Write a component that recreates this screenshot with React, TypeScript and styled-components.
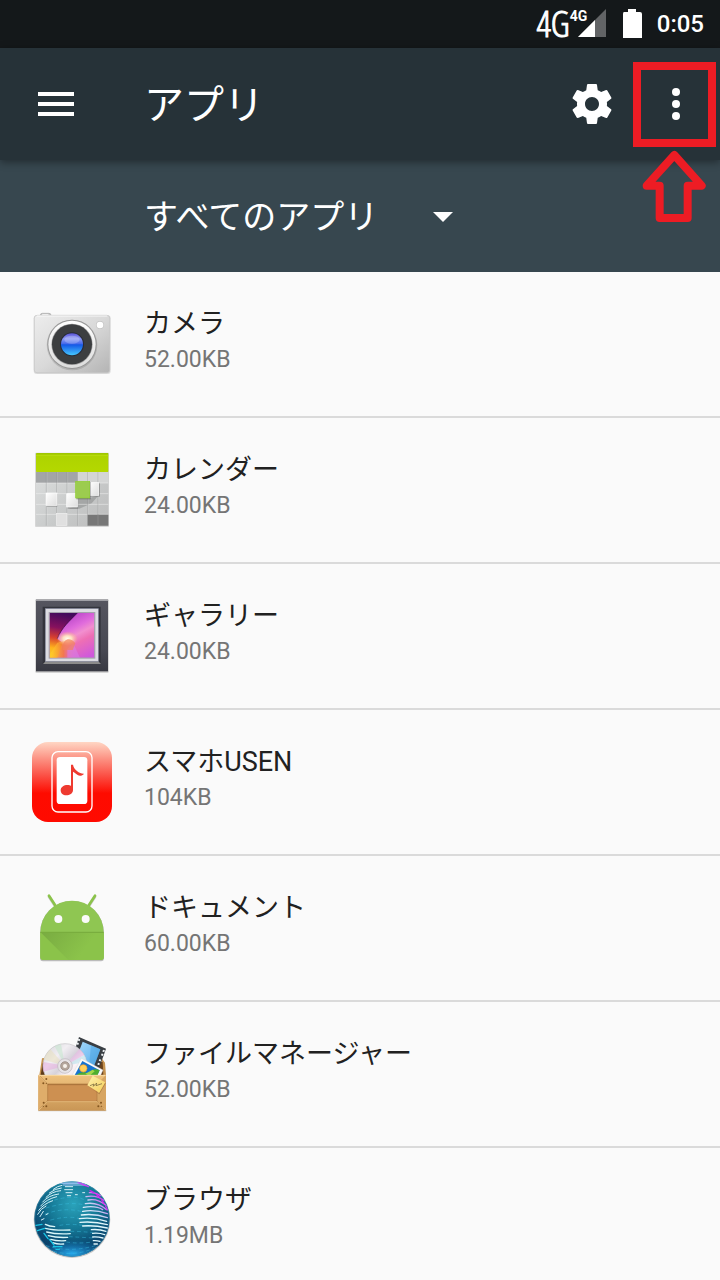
import React from "react";
import styled, { createGlobalStyle } from "styled-components";

const GlobalStyle = createGlobalStyle`
  *, *::before, *::after { box-sizing: border-box; }
  body {
    margin: 0;
    background: #fafafa;
    font-family: Roboto, "Noto Sans CJK JP", sans-serif;
  }
`;

const Screen = styled.div`
  position: relative;
  display: flex;
  flex-direction: column;
  height: 100vh;
  overflow: hidden;
  background: #fafafa;
`;

const StatusBar = styled.div`
  display: flex;
  align-items: center;
  justify-content: flex-end;
  flex: none;
  height: 48px;
  padding-right: 16px;
  background: #14181a;
  color: #fff;
`;

const NetworkType = styled.span`
  font: 300 36px/48px "Open Sans Condensed Light", "Open Sans Condensed", "Open Sans", sans-serif;
  -webkit-text-stroke: 1px currentColor;
`;

const Signal = styled.span`
  position: relative;
  display: flex;
  justify-content: flex-end;
  width: 36px;
  margin-right: 16px;
`;

const SignalLabel = styled.span`
  position: absolute;
  top: 0;
  left: 0;
  font: bold 14px/14px Roboto, sans-serif;
`;

const Clock = styled.time`
  margin-left: 15px;
  font-size: 24px;
  font-weight: 500;
  line-height: 48px;
`;

const AppBar = styled.header`
  position: relative;
  z-index: 1;
  display: flex;
  align-items: center;
  flex: none;
  height: 112px;
  padding: 0 20px 0 32px;
  background: #263238;
  box-shadow: 0 2px 8px rgba(0, 0, 0, 0.4);
  color: #fff;
`;

const IconButton = styled.button`
  display: flex;
  flex: none;
  padding: 0;
  border: 0;
  background: none;
  color: inherit;
`;

const Title = styled.h1`
  flex: 1;
  margin: 0 0 0 64px;
  padding-top: 4px;
  font-size: 40px;
  font-weight: 400;
  line-height: 56px;
`;

const Actions = styled.div`
  display: flex;
  gap: 36px;
`;

const FilterBar = styled.div`
  display: flex;
  align-items: center;
  flex: none;
  height: 112px;
  padding: 2px 0 0 144px;
  background: #37474f;
  color: #fff;
`;

const FilterField = styled.label`
  display: grid;
  align-items: center;
`;

const FilterSelect = styled.select`
  grid-area: 1 / 1;
  appearance: none;
  margin: 0;
  padding: 0 71px 0 0;
  border: 0;
  background: transparent;
  color: inherit;
  font-family: inherit;
  font-size: 34px;
  line-height: 48px;
`;

const FilterArrow = styled.svg`
  grid-area: 1 / 1;
  justify-self: end;
  pointer-events: none;
`;

const AppList = styled.ul`
  flex: 1;
  min-height: 0;
  margin: 0;
  padding: 0;
  overflow-y: auto;
  scrollbar-width: none;
  list-style: none;
`;

const AppRow = styled.li`
  display: flex;
  gap: 32px;
  height: 146px;
  padding: 32px 32px 0;
  border-bottom: 2px solid #dadada;
`;

const AppIcon = styled.svg`
  flex: none;
  width: 80px;
  height: 80px;
  overflow: visible;
`;

const AppText = styled.div`
  min-width: 0;
`;

const AppName = styled.div`
  color: #212121;
  font-size: 27px;
  line-height: 40px;
`;

const AppSize = styled.div`
  color: #757575;
  font-size: 23px;
  line-height: 32px;
`;

const Highlight = styled.div`
  position: absolute;
  z-index: 2;
  top: 62px;
  right: 4px;
  width: 83px;
  height: 85px;
  border: 8px solid #ed1c24;
  pointer-events: none;
`;

const Pointer = styled.svg`
  position: absolute;
  z-index: 2;
  top: 150px;
  right: 14px;
  pointer-events: none;
`;

const CameraIcon = () => (
  <AppIcon viewBox="36 12 240 240" aria-hidden="true">
    <defs>
      <linearGradient id="camBody" x1="0" y1="0" x2="1" y2="1">
        <stop offset="0" stopColor="#ededed" />
        <stop offset="0.5" stopColor="#d9d9d9" />
        <stop offset="1" stopColor="#b4b4b4" />
      </linearGradient>
      <linearGradient id="camRing" x1="0" y1="0" x2="0" y2="1">
        <stop offset="0" stopColor="#ffffff" />
        <stop offset="1" stopColor="#dcdcdc" />
      </linearGradient>
      <linearGradient id="camLens" x1="0" y1="0" x2="0" y2="1">
        <stop offset="0" stopColor="#5b55d8" />
        <stop offset="0.25" stopColor="#8d9af5" />
        <stop offset="0.48" stopColor="#4468ea" />
        <stop offset="0.52" stopColor="#1558e6" />
        <stop offset="1" stopColor="#45c8ff" />
      </linearGradient>
    </defs>
    <rect x="41" y="46" width="231" height="176" rx="9" fill="#000" opacity="0.12" />
    <rect x="61" y="40" width="32" height="14" rx="6" fill="#c6c6c6" stroke="#a8a8a8" strokeWidth="2" />
    <rect x="66" y="42" width="20" height="4" rx="2" fill="#f2f2f2" />
    <rect x="43" y="46" width="226" height="172" rx="8" fill="url(#camBody)" stroke="#c4c4c4" strokeWidth="2" />
    <path d="M50 48H262" stroke="#fff" strokeWidth="3" opacity="0.8" />
    <circle cx="156" cy="135" r="76" fill="#000" opacity="0.12" />
    <circle cx="156" cy="133" r="74" fill="#969696" />
    <circle cx="156" cy="133" r="71" fill="url(#camRing)" />
    <circle cx="156" cy="133" r="62" fill="#a5a5a5" />
    <circle cx="156" cy="133" r="60" fill="#3c3e40" />
    <circle cx="156" cy="133" r="36" fill="#272b38" />
    <circle cx="156" cy="133" r="33" fill="url(#camLens)" />
    <ellipse cx="156" cy="119" rx="23" ry="12" fill="#fff" opacity="0.22" />
    <circle cx="240" cy="75" r="12" fill="#c4c4c4" />
    <circle cx="240" cy="75" r="10" fill="#fff" />
  </AppIcon>
);

const CalendarIcon = () => (
  <AppIcon viewBox="36 30 240 240" aria-hidden="true">
    <defs>
      <linearGradient id="calTop" x1="0" y1="0" x2="0" y2="1">
        <stop offset="0" stopColor="#9cc400" />
        <stop offset="0.15" stopColor="#aed300" />
        <stop offset="1" stopColor="#b4d800" />
      </linearGradient>
      <linearGradient id="calBody" x1="0" y1="0" x2="1" y2="1">
        <stop offset="0" stopColor="#e2e4e4" />
        <stop offset="0.6" stopColor="#c8caca" />
        <stop offset="1" stopColor="#bcbcbc" />
      </linearGradient>
      <linearGradient id="calTile" x1="0" y1="0" x2="1" y2="1">
        <stop offset="0" stopColor="#fff" />
        <stop offset="1" stopColor="#dedede" />
      </linearGradient>
    </defs>
    <rect x="45" y="38" width="222" height="223" rx="3" fill="#000" opacity="0.14" />
    <rect x="48" y="39" width="217" height="219" rx="2" fill="url(#calBody)" />
    <path d="M48 96H173V129H48Z" fill="#a3a5a7" />
    <path d="M173 96H265V129H173Z" fill="#d4d5d5" />
    <path d="M174 174L208 174L236 166L215 190L178 206H146L172 196Z" fill="#8e9090" opacity="0.6" />
    <path d="M48 129H265M48 161H265M48 193H265M48 223H265" stroke="#f0f0f0" strokeWidth="2" opacity="0.8" />
    <path d="M79 96V257M110 96V257M141 96V257M173 96V257M203 96V257M234 96V257" stroke="#85888a" strokeWidth="2" opacity="0.5" />
    <path d="M81 96V257M112 96V257M143 96V257M175 96V257M205 96V257M236 96V257" stroke="#fff" strokeWidth="1" opacity="0.5" />
    <rect x="48" y="39" width="217" height="57" rx="2" fill="url(#calTop)" />
    <path d="M48 46H265" stroke="#c0e410" strokeWidth="2" />
    <path d="M203 224H265V257H203Z" fill="#777" />
    <path d="M234 224V257" stroke="#919191" strokeWidth="2" />
    <rect x="80" y="162" width="32" height="38" fill="#777" opacity="0.6" />
    <rect x="78" y="159" width="33" height="37" fill="url(#calTile)" stroke="#fff" strokeWidth="2" />
    <rect x="109" y="220" width="32" height="36" fill="#e0e0e0" stroke="#f0f0f0" strokeWidth="2" />
    <rect x="143" y="164" width="32" height="42" fill="#666" opacity="0.5" />
    <rect x="140" y="161" width="32" height="40" fill="url(#calTile)" stroke="#fff" strokeWidth="2" />
    <rect x="209" y="130" width="31" height="40" fill="#666" opacity="0.5" />
    <rect x="207" y="128" width="29" height="38" fill="url(#calTile)" stroke="#fff" strokeWidth="2" />
    <rect x="169" y="126" width="43" height="52" fill="#555" opacity="0.5" />
    <rect x="167" y="124" width="42" height="50" fill="#9ccc4f" stroke="#8ed02e" strokeWidth="2" />
  </AppIcon>
);

const GalleryIcon = () => (
  <AppIcon viewBox="36 30 240 240" aria-hidden="true">
    <defs>
      <linearGradient id="galFrame" x1="0" y1="0" x2="0" y2="1">
        <stop offset="0" stopColor="#55555f" />
        <stop offset="0.7" stopColor="#474852" />
        <stop offset="1" stopColor="#383942" />
      </linearGradient>
      <linearGradient id="galPink" gradientUnits="userSpaceOnUse" x1="140" y1="100" x2="200" y2="215">
        <stop offset="0" stopColor="#c04ccc" />
        <stop offset="0.25" stopColor="#e06bdc" />
        <stop offset="0.42" stopColor="#f28fcf" />
        <stop offset="0.6" stopColor="#ee6fb4" />
        <stop offset="1" stopColor="#cf58dc" />
      </linearGradient>
      <linearGradient id="galDark" gradientUnits="userSpaceOnUse" x1="120" y1="81" x2="98" y2="205">
        <stop offset="0" stopColor="#430a5c" />
        <stop offset="0.35" stopColor="#86115e" />
        <stop offset="0.6" stopColor="#d8402f" />
        <stop offset="0.85" stopColor="#ffb41c" />
        <stop offset="1" stopColor="#f7c32c" />
      </linearGradient>
      <linearGradient id="galFade" gradientUnits="userSpaceOnUse" x1="96" y1="200" x2="165" y2="200">
        <stop offset="0" stopColor="#ffc927" />
        <stop offset="0.5" stopColor="#f47a3c" />
        <stop offset="1" stopColor="#e56ac4" stopOpacity="0" />
      </linearGradient>
      <radialGradient id="galGlow">
        <stop offset="0" stopColor="#fffdf0" />
        <stop offset="0.4" stopColor="#ffe9c0" stopOpacity="0.9" />
        <stop offset="1" stopColor="#ffb27a" stopOpacity="0" />
      </radialGradient>
      <clipPath id="galClip">
        <rect x="89" y="81" width="134" height="134" />
      </clipPath>
    </defs>
    <rect x="46" y="40" width="220" height="220" rx="3" fill="#000" opacity="0.2" />
    <rect x="48" y="41" width="216" height="215" fill="url(#galFrame)" />
    <path d="M48 43H264" stroke="#b0b0b5" strokeWidth="3" />
    <path d="M68 62H242V234H68Z" fill="#33343c" />
    <path d="M69 234L77 226H235L243 234Z" fill="#8b8b8b" />
    <rect x="76" y="68" width="159" height="158" fill="#dcdce2" stroke="#8a8da0" strokeWidth="2" />
    <rect x="86" y="78" width="140" height="140" fill="#a4a2ac" />
    <g clipPath="url(#galClip)">
      <rect x="89" y="81" width="134" height="134" fill="url(#galPink)" />
      <path d="M89 81H172C150 104 125 124 112 158L128 170L112 215H89Z" fill="url(#galDark)" />
      <path d="M172 81C150 104 125 124 112 158" fill="none" stroke="#2c0639" strokeWidth="2" />
      <path d="M89 206L112 170L150 160L165 180V215H89Z" fill="url(#galFade)" opacity="0.85" />
      <path d="M142 190L160 172L180 215H142Z" fill="#d784ea" opacity="0.5" />
      <ellipse cx="142" cy="158" rx="32" ry="22" fill="url(#galGlow)" />
      <path d="M128 180C132 156 152 154 166 172L158 192H128Z" fill="#f2825c" opacity="0.7" />
    </g>
  </AppIcon>
);

const MusicIcon = () => (
  <AppIcon viewBox="36 30 240 240" aria-hidden="true">
    <defs>
      <linearGradient id="usen" gradientUnits="userSpaceOnUse" x1="0" y1="30" x2="0" y2="270">
        <stop offset="0" stopColor="#ffd6c4" />
        <stop offset="0.2" stopColor="#fc9586" />
        <stop offset="0.42" stopColor="#fb5045" />
        <stop offset="0.64" stopColor="#fe0b00" />
        <stop offset="1" stopColor="#ff0a00" />
      </linearGradient>
    </defs>
    <rect x="36" y="30" width="240" height="240" rx="48" fill="url(#usen)" />
    <rect x="96" y="59" width="120" height="181" rx="18" fill="none" stroke="#fff" strokeWidth="4" />
    <rect x="110" y="75" width="92" height="141" rx="10" fill="#fff" />
    <path d="M153 98H159C161 113 180 126 192 125C187 132 178 133 173 129C167 124 162 120 159 119V174C159 184 149 190 139 190C129 190 122 184 122 175C122 165 132 159 142 159C147 159 151 160 153 162Z" fill="#ee3a30" />
  </AppIcon>
);

const AndroidIcon = () => (
  <AppIcon viewBox="36 24 240 240" aria-hidden="true">
    <defs>
      <linearGradient id="droidFold" gradientUnits="userSpaceOnUse" x1="70" y1="165" x2="170" y2="240">
        <stop offset="0" stopColor="#7aad42" />
        <stop offset="1" stopColor="#8bc34a" />
      </linearGradient>
    </defs>
    <g fill="none" stroke="#000" strokeOpacity="0.2" strokeWidth="8" strokeLinecap="round">
      <path d="M87 50L105 78M225 50L207 78" />
    </g>
    <path d="M60 159A96 96 0 0 1 252 159V234Q252 244 243 244H69Q60 244 60 234Z" fill="#000" opacity="0.25" />
    <path d="M87 47L107 78M225 47L205 78" stroke="#8bc34a" strokeWidth="8" strokeLinecap="round" />
    <path d="M61 157A95 95 0 0 1 251 157V231Q251 240 242 240H70Q61 240 61 231Z" fill="#8fc652" />
    <path d="M61 157H251V231Q251 240 242 240H70Q61 240 61 231Z" fill="#8bc34a" />
    <path d="M64 159H251V231Q251 240 242 240H145Z" fill="url(#droidFold)" />
    <path d="M61 157H251" stroke="#699b36" strokeWidth="2" />
    <circle cx="115" cy="117" r="12" fill="#fafafa" />
    <circle cx="197" cy="117" r="12" fill="#fafafa" />
  </AppIcon>
);

const FileManagerIcon = () => (
  <AppIcon viewBox="36 24 240 240" aria-hidden="true">
    <defs>
      <linearGradient id="boxWood" x1="0" y1="0" x2="0" y2="1">
        <stop offset="0" stopColor="#efc27e" />
        <stop offset="1" stopColor="#c99655" />
      </linearGradient>
      <linearGradient id="disc" x1="0" y1="0" x2="1" y2="1">
        <stop offset="0" stopColor="#d4d4d8" />
        <stop offset="0.3" stopColor="#f1eef2" />
        <stop offset="0.48" stopColor="#d6d2da" />
        <stop offset="0.6" stopColor="#faf3f7" />
        <stop offset="1" stopColor="#d0cbd2" />
      </linearGradient>
      <linearGradient id="film" x1="0" y1="0" x2="1" y2="1">
        <stop offset="0" stopColor="#a8dafa" />
        <stop offset="0.5" stopColor="#7cc2f4" />
        <stop offset="1" stopColor="#479fde" />
      </linearGradient>
      <linearGradient id="note" x1="0" y1="0" x2="1" y2="1">
        <stop offset="0" stopColor="#fff2ae" />
        <stop offset="1" stopColor="#f5cf58" />
      </linearGradient>
      <clipPath id="boxContents">
        <path d="M40 24H276V147H40Z" />
      </clipPath>
    </defs>
    <path d="M66 97L72 96V147H58ZM246 98L255 110L258 147H236Z" fill="#c5924f" />
    <path d="M68 112L76 108V147H62Z" fill="#5d3b1a" />
    <path d="M236 108H248L250 147H232Z" fill="#6b431d" />
    <g clipPath="url(#boxContents)">
      <path d="M177 33L258 68L229 150L150 116Z" fill="#393e43" />
      <path d="M188 47L241 70L219 128L166 105Z" fill="url(#film)" />
      <path d="M213 58L241 70L219 128L207 123Z" fill="#4ba4df" opacity="0.5" />
      <path d="M178 39L171 59M168 65L162 82M252 72L244 93M241 100L234 119" stroke="#eef2f4" strokeWidth="6" strokeDasharray="6 6" />
      <circle cx="135" cy="119" r="66" fill="url(#disc)" stroke="#c4c1c6" strokeWidth="2" />
      <path d="M135 119L72 101A66 66 0 0 1 91 70Z" fill="#e8dfaf" opacity="0.4" />
      <path d="M135 119L70 137A66 66 0 0 1 70 108Z" fill="#e5a7de" opacity="0.5" />
      <path d="M135 119L104 61A66 66 0 0 1 123 54Z" fill="#c8e6d0" opacity="0.6" />
      <path d="M135 119L178 69A66 66 0 0 1 193 87Z" fill="#e8b9e4" opacity="0.6" />
      <path d="M135 119L193 87A66 66 0 0 1 200 107Z" fill="#c3e6ee" opacity="0.7" />
      <circle cx="135" cy="120" r="22" fill="#e6e3e6" stroke="#bdb7bc" strokeWidth="2" />
      <circle cx="135" cy="120" r="13" fill="#b5a79d" stroke="#8b7d74" strokeWidth="2" />
      <circle cx="135" cy="120" r="6" fill="#f7f2ec" />
      <path d="M184 97L249 132L240 152H154Z" fill="#fafafa" stroke="#cdd2d7" strokeWidth="1" />
      <path d="M187 105L239 133L230 151H162Z" fill="#1673cf" />
      <path d="M170 147C182 136 196 138 206 143C215 129 228 127 239 133L231 151H168Z" fill="#4fae2f" />
      <path d="M196 143L218 131L224 136L208 150Z" fill="#a5d84a" />
      <circle cx="190" cy="127" r="11" fill="#ffd05c" stroke="#f3a22d" strokeWidth="2" />
    </g>
    <rect x="54" y="250" width="205" height="6" rx="2" fill="#000" opacity="0.2" />
    <rect x="55" y="147" width="203" height="107" rx="2" fill="url(#boxWood)" />
    <path d="M55 148H258" stroke="#f9dba5" strokeWidth="3" />
    <path d="M55 147L83 174V226L55 254Z" fill="#dfad6a" />
    <path d="M258 147L231 174V226L258 254Z" fill="#d7a562" />
    <path d="M83 174H231V226H83Z" fill="#cd9051" stroke="#b07a40" strokeWidth="2" />
    <path d="M83 176H231" stroke="#9c6630" strokeWidth="2" />
    <path d="M56 148L83 174M56 253L83 226M257 253L231 226M83 227H231" fill="none" stroke="#f2ca8c" strokeWidth="2" />
    <path d="M60 150L86 177M60 247L84 223M252 247L229 223" stroke="#92652f" strokeWidth="1" />
    <g fill="#82551f">
      <circle cx="70" cy="172" r="3" /><circle cx="79" cy="159" r="3" /><circle cx="79" cy="172" r="2" />
      <circle cx="71" cy="230" r="3" /><circle cx="79" cy="241" r="3" /><circle cx="70" cy="241" r="2" />
      <circle cx="243" cy="230" r="3" /><circle cx="235" cy="241" r="3" /><circle cx="244" cy="241" r="2" />
    </g>
    <path d="M205 181L238 205L257 172L253 168L236 202Z" fill="#704418" opacity="0.4" />
    <path d="M218 149L256 169L238 200L202 178Z" fill="url(#note)" />
    <path d="M210 179L222 174L220 181L230 171L228 179L246 173" fill="none" stroke="#695a35" strokeWidth="2" />
  </AppIcon>
);

const BrowserIcon = () => (
  <AppIcon viewBox="36 30 240 240" aria-hidden="true">
    <defs>
      <radialGradient id="globe" cx="0.52" cy="0.3" r="0.72">
        <stop offset="0" stopColor="#2ba3bb" />
        <stop offset="0.45" stopColor="#167996" />
        <stop offset="0.78" stopColor="#0b4a72" />
        <stop offset="1" stopColor="#0e3963" />
      </radialGradient>
      <radialGradient id="globeBase" cx="0.5" cy="0.5" r="0.5">
        <stop offset="0" stopColor="#27a9ec" />
        <stop offset="1" stopColor="#1683ca" stopOpacity="0" />
      </radialGradient>
      <linearGradient id="landEast" gradientUnits="userSpaceOnUse" x1="200" y1="140" x2="255" y2="85">
        <stop offset="0" stopColor="#e4f8fc" />
        <stop offset="0.5" stopColor="#c3cdf2" />
        <stop offset="1" stopColor="#d72bf0" />
      </linearGradient>
      <clipPath id="globeClip">
        <circle cx="156" cy="147" r="113" />
      </clipPath>
    </defs>
    <circle cx="156" cy="149" r="115" fill="#000" opacity="0.2" />
    <circle cx="156" cy="147" r="113" fill="url(#globe)" />
    <g clipPath="url(#globeClip)" fill="none" strokeLinecap="round">
      <ellipse cx="156" cy="250" rx="105" ry="40" fill="url(#globeBase)" />
      <g stroke="#39bde0" strokeWidth="2" strokeDasharray="9 11" opacity="0.7">
        <path d="M84 96Q156 72 190 88" />
        <path d="M78 114Q150 92 196 106" />
        <path d="M76 132Q136 110 190 126" />
        <path d="M92 150Q146 136 180 146" />
        <path d="M120 166Q160 158 216 172" />
        <path d="M152 184Q186 184 218 188" />
        <path d="M148 200Q184 202 222 204" />
        <path d="M140 216Q176 222 216 216" />
        <path d="M60 220Q140 254 236 224" />
        <path d="M82 238Q150 264 220 236" />
      </g>
      <g stroke="#d3f0f6" strokeWidth="3">
        <path d="M100 58Q112 48 126 46M88 69Q106 55 124 54M78 82Q96 64 122 62" />
        <path d="M68 96Q84 76 116 72M62 108Q78 88 110 80M56 121Q70 102 98 92" />
        <path d="M53 133Q62 116 78 108M60 140L70 124M64 150L72 146M78 134L84 131" />
        <path d="M136 50H158M134 59H158M138 68H156M142 77H152M166 74H172M188 68H194" />
      </g>
      <path d="M108 40H190M120 36H182M130 45H198" stroke="#a9c8fa" strokeWidth="3" />
      <path d="M174 37L196 47M184 40L205 50" stroke="#d03ef5" strokeWidth="4" />
      <g stroke="#d8f6f8" strokeWidth="4">
        <path d="M76 163Q88 169 104 170M76 175Q104 182 150 180M80 186Q110 194 151 191M85 197Q112 204 143 202M92 208Q112 214 137 212M98 218Q114 224 131 222" />
      </g>
      <path d="M48 166L66 163M52 182L74 175M72 190L84 206M88 208L102 225M100 230H126M108 238H118" stroke="#18c5e6" strokeWidth="4" />
      <g stroke="url(#landEast)" strokeWidth="4">
        <path d="M208 68Q226 66 242 77M198 80Q228 74 252 91M204 90Q232 84 258 106M196 101Q232 95 260 119" />
        <path d="M190 112Q228 106 248 119M188 124Q226 118 262 131M184 135Q224 130 262 143" />
      </g>
      <g stroke="#dff6fb" strokeWidth="4">
        <path d="M178 146Q220 141 260 154M180 157Q222 153 262 164M188 168Q222 165 262 174" />
        <path d="M214 179Q238 177 258 184M218 190Q238 188 254 194M218 201Q234 200 249 204M220 212Q230 211 240 214M222 222L232 222" />
      </g>
      <path d="M210 62Q246 78 263 122" stroke="#d321ef" strokeWidth="4" strokeDasharray="14 8" />
      <circle cx="156" cy="147" r="112" stroke="#47afcc" strokeWidth="2" opacity="0.6" />
    </g>
  </AppIcon>
);

const apps = [
  { name: "カメラ", size: "52.00KB", Icon: CameraIcon },
  { name: "カレンダー", size: "24.00KB", Icon: CalendarIcon },
  { name: "ギャラリー", size: "24.00KB", Icon: GalleryIcon },
  { name: "スマホUSEN", size: "104KB", Icon: MusicIcon },
  { name: "ドキュメント", size: "60.00KB", Icon: AndroidIcon },
  { name: "ファイルマネージャー", size: "52.00KB", Icon: FileManagerIcon },
  { name: "ブラウザ", size: "1.19MB", Icon: BrowserIcon },
];

export default function App() {
  return (
    <Screen lang="ja">
      <GlobalStyle />
      <StatusBar>
        <NetworkType>4G</NetworkType>
        <Signal>
          <SignalLabel>4G</SignalLabel>
          <svg width="28" height="30" viewBox="0 0 28 30" aria-hidden="true">
            <path d="M28 0V28H0Z" fill="#626466" />
            <path d="M17 11V28H0Z" fill="#fff" />
          </svg>
        </Signal>
        <svg width="20" height="30" viewBox="0 0 20 30" aria-hidden="true">
          <path d="M6 0H14V3H18Q20 3 20 5V29H1V5Q1 3 2 3H6Z" fill="#fff" />
        </svg>
        <Clock>0:05</Clock>
      </StatusBar>

      <AppBar>
        <IconButton type="button" aria-label="メニュー">
          <svg width="48" height="48" viewBox="0 0 24 24" fill="currentColor">
            <path d="M3 6h18v2H3zM3 11h18v2H3zM3 16h18v2H3z" />
          </svg>
        </IconButton>
        <Title>アプリ</Title>
        <Actions>
          <IconButton type="button" aria-label="設定">
            <svg width="48" height="48" viewBox="0 0 24 24" fill="currentColor">
              <path d="M19.43 12.98c.04-.32.07-.64.07-.98s-.03-.66-.07-.98l2.11-1.65c.19-.15.24-.42.12-.64l-2-3.46c-.12-.22-.39-.3-.61-.22l-2.49 1c-.52-.4-1.08-.73-1.69-.98l-.38-2.65C14.46 2.18 14.25 2 14 2h-4c-.25 0-.46.18-.49.42l-.38 2.65c-.61.25-1.17.59-1.69.98l-2.49-1c-.23-.09-.49 0-.61.22l-2 3.46c-.13.22-.07.49.12.64l2.11 1.65c-.04.32-.07.65-.07.98s.03.66.07.98l-2.11 1.65c-.19.15-.24.42-.12.64l2 3.46c.12.22.39.3.61.22l2.49-1c.52.4 1.08.73 1.69.98l.38 2.65c.03.24.24.42.49.42h4c.25 0 .46-.18.49-.42l.38-2.65c.61-.25 1.17-.59 1.69-.98l2.49 1c.23.09.49 0 .61-.22l2-3.46c.12-.22.07-.49-.12-.64l-2.11-1.65zM12 15.5c-1.93 0-3.5-1.57-3.5-3.5s1.57-3.5 3.5-3.5 3.5 1.57 3.5 3.5-1.57 3.5-3.5 3.5z" />
            </svg>
          </IconButton>
          <IconButton type="button" aria-label="その他">
            <svg width="48" height="48" viewBox="0 0 24 24" fill="currentColor">
              <circle cx="12" cy="6" r="2" />
              <circle cx="12" cy="12" r="2" />
              <circle cx="12" cy="18" r="2" />
            </svg>
          </IconButton>
        </Actions>
      </AppBar>

      <FilterBar>
        <FilterField>
          <FilterSelect aria-label="表示するアプリ" defaultValue="all">
            <option value="all">すべてのアプリ</option>
          </FilterSelect>
          <FilterArrow width="20" height="10" viewBox="0 0 20 10" aria-hidden="true">
            <path d="M0 0H20L10 10Z" fill="#fff" />
          </FilterArrow>
        </FilterField>
      </FilterBar>

      <AppList>
        {apps.map(({ name, size, Icon }) => (
          <AppRow key={name}>
            <Icon />
            <AppText>
              <AppName>{name}</AppName>
              <AppSize>{size}</AppSize>
            </AppText>
          </AppRow>
        ))}
      </AppList>

      <Highlight />
      <Pointer width="64" height="72" viewBox="247 300 192 216" aria-hidden="true">
        <path
          d="M344 315L426 407H384V504H300V407H261Z"
          fill="none"
          stroke="#ed1c24"
          strokeWidth="24"
          strokeLinejoin="round"
        />
      </Pointer>
    </Screen>
  );
}
